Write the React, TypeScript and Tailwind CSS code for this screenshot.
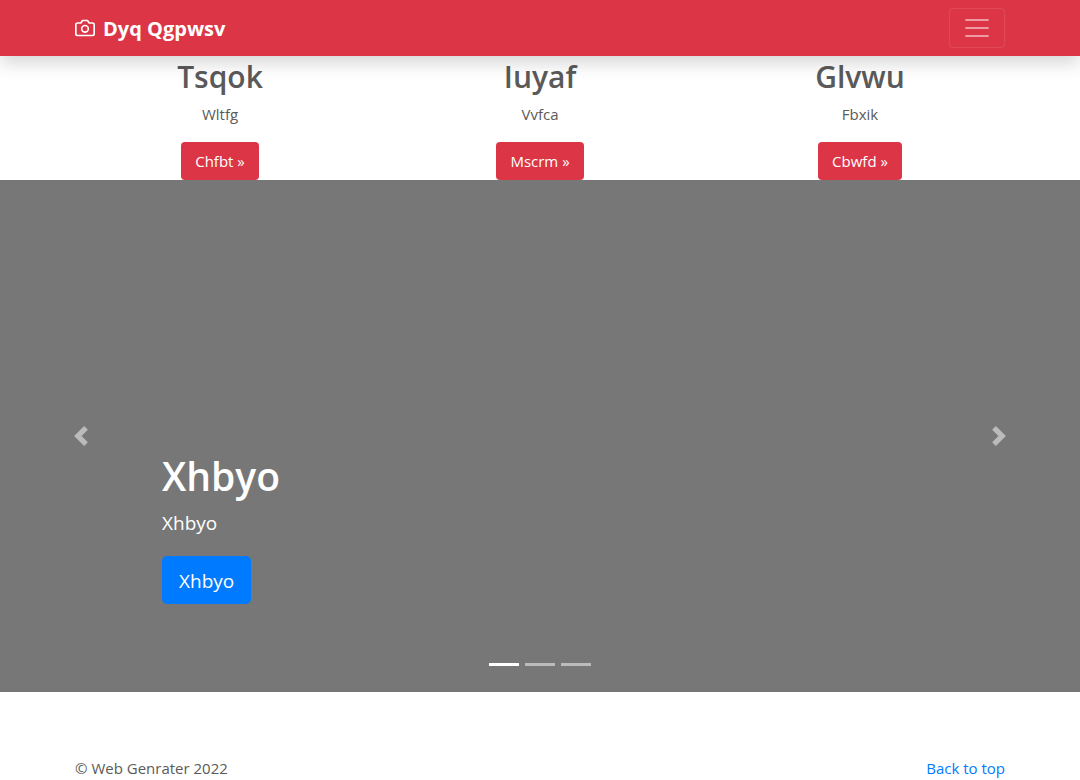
import React from "react";

const columns = [
  { title: "Tsqok", text: "Wltfg", action: "Chfbt »" },
  { title: "Iuyaf", text: "Vvfca", action: "Mscrm »" },
  { title: "Glvwu", text: "Fbxik", action: "Cbwfd »" },
];

function CameraIcon() {
  return (
    <svg
      className="mr-2 size-5"
      viewBox="0 0 24 24"
      fill="none"
      stroke="currentColor"
      strokeWidth="2"
      strokeLinecap="round"
      strokeLinejoin="round"
      aria-hidden="true"
    >
      <path d="M23 19a2 2 0 0 1-2 2H3a2 2 0 0 1-2-2V8a2 2 0 0 1 2-2h4l2-3h6l2 3h4a2 2 0 0 1 2 2z" />
      <circle cx="12" cy="13" r="4" />
    </svg>
  );
}

function Header() {
  return (
    <header className="relative z-10 bg-[#dc3545] shadow-[0_8px_16px_rgba(0,0,0,0.15)]">
      <div className="mx-auto flex h-14 max-w-[960px] items-center justify-between px-[15px]">
        <a href="#" className="flex items-center text-xl font-bold text-white">
          <CameraIcon />
          <span className="pt-0.5">Dyq Qgpwsv</span>
        </a>
        <button
          type="button"
          aria-label="Toggle navigation"
          className="flex h-10 w-14 items-center justify-center rounded border border-white/10 text-white/50"
        >
          <svg className="size-[30px]" viewBox="0 0 30 30" aria-hidden="true">
            <path
              d="M4 7h22M4 15h22M4 23h22"
              stroke="currentColor"
              strokeWidth="2"
              strokeLinecap="round"
              strokeMiterlimit="10"
            />
          </svg>
        </button>
      </div>
    </header>
  );
}

function Carousel() {
  return (
    <section aria-label="Carousel" className="relative h-[512px] bg-[#777777] text-white">
      <button
        type="button"
        aria-label="Previous"
        className="absolute inset-y-0 left-0 flex w-[15%] items-center justify-center opacity-50"
      >
        <svg className="size-5" viewBox="0 0 8 8" fill="currentColor" aria-hidden="true">
          <path d="M5.25 0l-4 4 4 4 1.5-1.5L4.25 4l2.5-2.5L5.25 0z" />
        </svg>
      </button>
      <div className="absolute inset-x-[15%] bottom-12 pb-10">
        <h1 className="mb-2 text-[39px] leading-12 font-semibold">Xhbyo</h1>
        <p className="mb-[18px] text-[19px] leading-[30px]">Xhbyo</p>
        <a
          href="#"
          className="inline-block rounded-[5px] bg-[#007bff] px-[17px] pt-[10px] pb-2 text-[19px] leading-[30px]"
        >
          Xhbyo
        </a>
      </div>
      <div className="absolute inset-x-[15%] bottom-4 flex justify-center gap-[6px]">
        <button type="button" aria-label="Slide 1" className="h-[23px] w-[30px] border-y-10 border-transparent bg-white bg-clip-padding" />
        <button type="button" aria-label="Slide 2" className="h-[23px] w-[30px] border-y-10 border-transparent bg-white bg-clip-padding opacity-50" />
        <button type="button" aria-label="Slide 3" className="h-[23px] w-[30px] border-y-10 border-transparent bg-white bg-clip-padding opacity-50" />
      </div>
      <button
        type="button"
        aria-label="Next"
        className="absolute inset-y-0 right-0 flex w-[15%] items-center justify-center opacity-50"
      >
        <svg className="size-5" viewBox="0 0 8 8" fill="currentColor" aria-hidden="true">
          <path d="M2.75 0l-1.5 1.5L3.75 4l-2.5 2.5L2.75 8l4-4-4-4z" />
        </svg>
      </button>
    </section>
  );
}

export default function App() {
  return (
    <div className="bg-white font-['Open_Sans','Noto_Sans',sans-serif] text-[15px] text-[#5a5a5a]">
      <Header />
      <main>
        <div className="mx-auto grid max-w-[960px] grid-cols-3 text-center">
          {columns.map((column) => (
            <section key={column.title} className="px-[15px]">
              <h2 className="mb-2 pt-1 text-[30px] leading-[34px] font-semibold">{column.title}</h2>
              <p className="mb-4 leading-6">{column.text}</p>
              <a href="#" className="inline-block rounded bg-[#dc3545] px-[14px] py-[7px] align-top leading-6 text-white">
                {column.action}
              </a>
            </section>
          ))}
        </div>
        <Carousel />
      </main>
      <footer className="mx-auto mt-16 flex max-w-[960px] justify-between px-[15px] leading-6">
        <p>© Web Genrater 2022</p>
        <a href="#" className="text-[#007bff]">Back to top</a>
      </footer>
    </div>
  );
}
